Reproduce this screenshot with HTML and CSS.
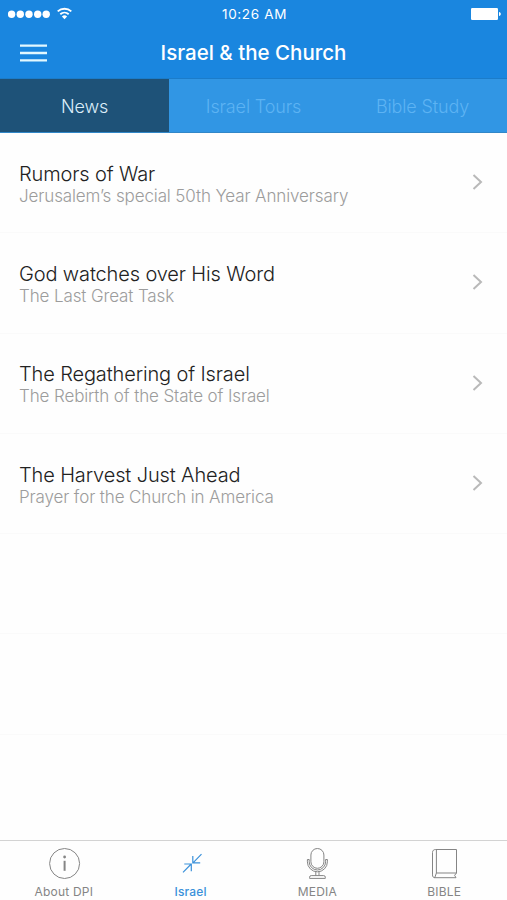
FILE: index.html
```html
<!DOCTYPE html>
<html lang="en">
<head>
<meta charset="UTF-8">
<meta name="viewport" content="width=device-width, initial-scale=1.0">
<title>Israel &amp; the Church</title>
<link rel="stylesheet" href="styles.css">
</head>
<body>
<div class="app">
    <header class="header">
        <div class="status">
            <div class="signal">
                <svg width="66" height="16" viewBox="0 0 66 16" fill="#fff">
                    <circle cx="3.6" cy="8.2" r="3.7"/>
                    <circle cx="12.3" cy="8.2" r="3.7"/>
                    <circle cx="21" cy="8.2" r="3.7"/>
                    <circle cx="29.7" cy="8.2" r="3.7"/>
                    <circle cx="38.2" cy="8.2" r="3.7"/>
                    <g fill="none" stroke="#fff" stroke-width="1.9">
                        <path d="M49.7 5.4a10.2 10.2 0 0 1 13.6 0"/>
                        <path d="M52.3 8.3a6.2 6.2 0 0 1 8.4 0"/>
                    </g>
                    <path d="M56.5 13.2l-2.6-2.8a3.8 3.8 0 0 1 5.2 0z"/>
                </svg>
            </div>
            <div class="time">10:26 AM</div>
            <div class="battery">
                <svg width="30" height="12" viewBox="0 0 30 12" fill="#fff">
                    <rect x="0" y="0" width="27" height="12" rx="1.2"/>
                    <path d="M28 4c2.4.4 2.4 3.6 0 4z"/>
                </svg>
            </div>
        </div>
        <div class="navbar">
            <button class="menu" aria-label="Menu">
                <svg width="27" height="18" viewBox="0 0 27 18"><path d="M0.5 1.6h26M0.5 9h26M0.5 16.4h26"/></svg>
            </button>
            <h1>Israel &amp; the Church</h1>
        </div>
    </header>

    <nav class="tabs">
        <a class="tab active">News</a>
        <a class="tab">Israel Tours</a>
        <a class="tab">Bible Study</a>
    </nav>

    <main class="list">
        <div class="row">
            <div class="text">
                <div class="title">Rumors of War</div>
                <div class="subtitle">Jerusalem’s special 50th Year Anniversary</div>
            </div>
            <svg class="chevron" width="12" height="18" viewBox="0 0 12 18"><path d="M1.5 2l7.5 7-7.5 7"/></svg>
        </div>
        <div class="row">
            <div class="text">
                <div class="title">God watches over His Word</div>
                <div class="subtitle">The Last Great Task</div>
            </div>
            <svg class="chevron" width="12" height="18" viewBox="0 0 12 18"><path d="M1.5 2l7.5 7-7.5 7"/></svg>
        </div>
        <div class="row">
            <div class="text">
                <div class="title">The Regathering of Israel</div>
                <div class="subtitle">The Rebirth of the State of Israel</div>
            </div>
            <svg class="chevron" width="12" height="18" viewBox="0 0 12 18"><path d="M1.5 2l7.5 7-7.5 7"/></svg>
        </div>
        <div class="row">
            <div class="text">
                <div class="title">The Harvest Just Ahead</div>
                <div class="subtitle">Prayer for the Church in America</div>
            </div>
            <svg class="chevron" width="12" height="18" viewBox="0 0 12 18"><path d="M1.5 2l7.5 7-7.5 7"/></svg>
        </div>
        <div class="row"></div>
        <div class="row"></div>
    </main>

    <footer class="tabbar">
        <a class="item">
            <svg width="34" height="34" viewBox="0 0 34 34">
                <circle cx="17.6" cy="16.5" r="15"/>
                <path d="M17.6 13.8v10" stroke-width="2"/>
                <circle cx="17.6" cy="10" r="1.4" fill="#858585" stroke="none"/>
            </svg>
            <span>About DPI</span>
        </a>
        <a class="item active">
            <svg width="34" height="34" viewBox="0 0 34 34">
                <path d="M27.5 7.2l-8.5 8.6M18.8 9v6.9h7.4"/>
                <path d="M9 25.3l8.2-8.3M10.3 17h7v7.2"/>
            </svg>
            <span>Israel</span>
        </a>
        <a class="item">
            <svg width="34" height="34" viewBox="0 0 34 34">
                <rect x="10.9" y="1.5" width="13" height="19.8" rx="6.5"/>
                <path d="M9.2 12.5H7.4v2.3a9.8 9.8 0 0 0 20 0v-2.3h-1.8v2.3a8.2 8.2 0 0 1-16.4 0z"/>
                <path d="M15.8 24.3v4.3M19 24.3v4.3"/>
                <path d="M11.2 28.6h12.5a1.6 1.6 0 0 1 1.6 1.6v1.2H9.6v-1.2a1.6 1.6 0 0 1 1.6-1.6z"/>
            </svg>
            <span>MEDIA</span>
        </a>
        <a class="item">
            <svg width="34" height="34" viewBox="0 0 34 34">
                <path d="M8.7 2.5H29.5v23.5H9.4M7.6 30.7H29l-1.4-2.4 1.9-2.3"/>
                <path d="M8.7 2.5c-2 0-3.2 1-3.2 3v22.4c0 1.8.8 2.8 2.5 2.8M9.4 2.7V26l-1.6 4.5"/>
            </svg>
            <span>BIBLE</span>
        </a>
    </footer>
</div>
</body>
</html>
```
FILE: styles.css
```css
* {
    box-sizing: border-box;
}
body {
    margin: 0;
    background: #fefefe;
    font-family: Inter, "Liberation Sans", sans-serif;
}
.app {
    height: 900px;
    display: flex;
    flex-direction: column;
    overflow: hidden;
}
svg {
    display: block;
    flex: none;
}
.header {
    height: 79px;
    background: #1a86df;
    color: #fff;
    border-bottom: 1px solid #1b7cca;
}
.status {
    height: 27px;
    padding: 0 6px 0 8px;
    display: grid;
    grid-template-columns: 1fr auto 1fr;
    align-items: center;
}
.time {
    font-size: 13.5px;
    letter-spacing: 0.65px;
}
.battery {
    justify-self: end;
}
.navbar {
    height: 51px;
    display: grid;
    grid-template-columns: 60px 1fr 60px;
    align-items: center;
}
.menu {
    padding: 0;
    margin-left: 20px;
    width: 27px;
    border: 0;
    background: none;
}
.menu path {
    fill: none;
    stroke: #e2f8ff;
    stroke-width: 2.4;
    stroke-linecap: round;
}
h1 {
    margin: 0;
    font-size: 20.5px;
    line-height: 24px;
    font-weight: 500;
    text-align: center;
}
.tabs {
    height: 54px;
    display: grid;
    grid-template-columns: 1fr 1fr 1fr;
    background: #3196e4;
    border-bottom: 1px solid #3187c8;
}
.tab {
    display: flex;
    align-items: center;
    justify-content: center;
    padding-top: 1px;
    font-size: 18px;
    font-weight: 300;
    letter-spacing: -0.15px;
    color: #5db3f3;
}
.tab.active {
    background: #1e5278;
    color: #dcedf8;
}
.list {
    flex: 1;
}
.row {
    height: 100.3px;
    padding: 0 23px 1px 19px;
    display: flex;
    align-items: center;
    justify-content: space-between;
    border-bottom: 1px solid #fafafa;
}
.text {
    padding-top: 4px;
}
.title {
    font-size: 20px;
    line-height: 24px;
    font-weight: 300;
    letter-spacing: -0.13px;
    color: #222;
}
.subtitle {
    font-size: 17px;
    line-height: 21px;
    font-weight: 300;
    letter-spacing: -0.12px;
    color: #9c9c9c;
}
.chevron path {
    fill: none;
    stroke: #b9b9b9;
    stroke-width: 2;
}
.tabbar {
    height: 60px;
    display: grid;
    grid-template-columns: repeat(4, 1fr);
    border-top: 1px solid #d3d3d3;
    padding-top: 6px;
}
.item {
    display: flex;
    flex-direction: column;
    align-items: center;
    gap: 3px;
    padding-left: 1px;
    font-size: 12px;
    line-height: 16px;
    letter-spacing: 0.2px;
    color: #858585;
}
.item svg {
    fill: none;
    stroke: #858585;
    stroke-width: 1;
}
.item.active {
    color: #3b91da;
    font-weight: 500;
}
.item.active svg {
    stroke: #3b91da;
    stroke-width: 1.2;
}
```
